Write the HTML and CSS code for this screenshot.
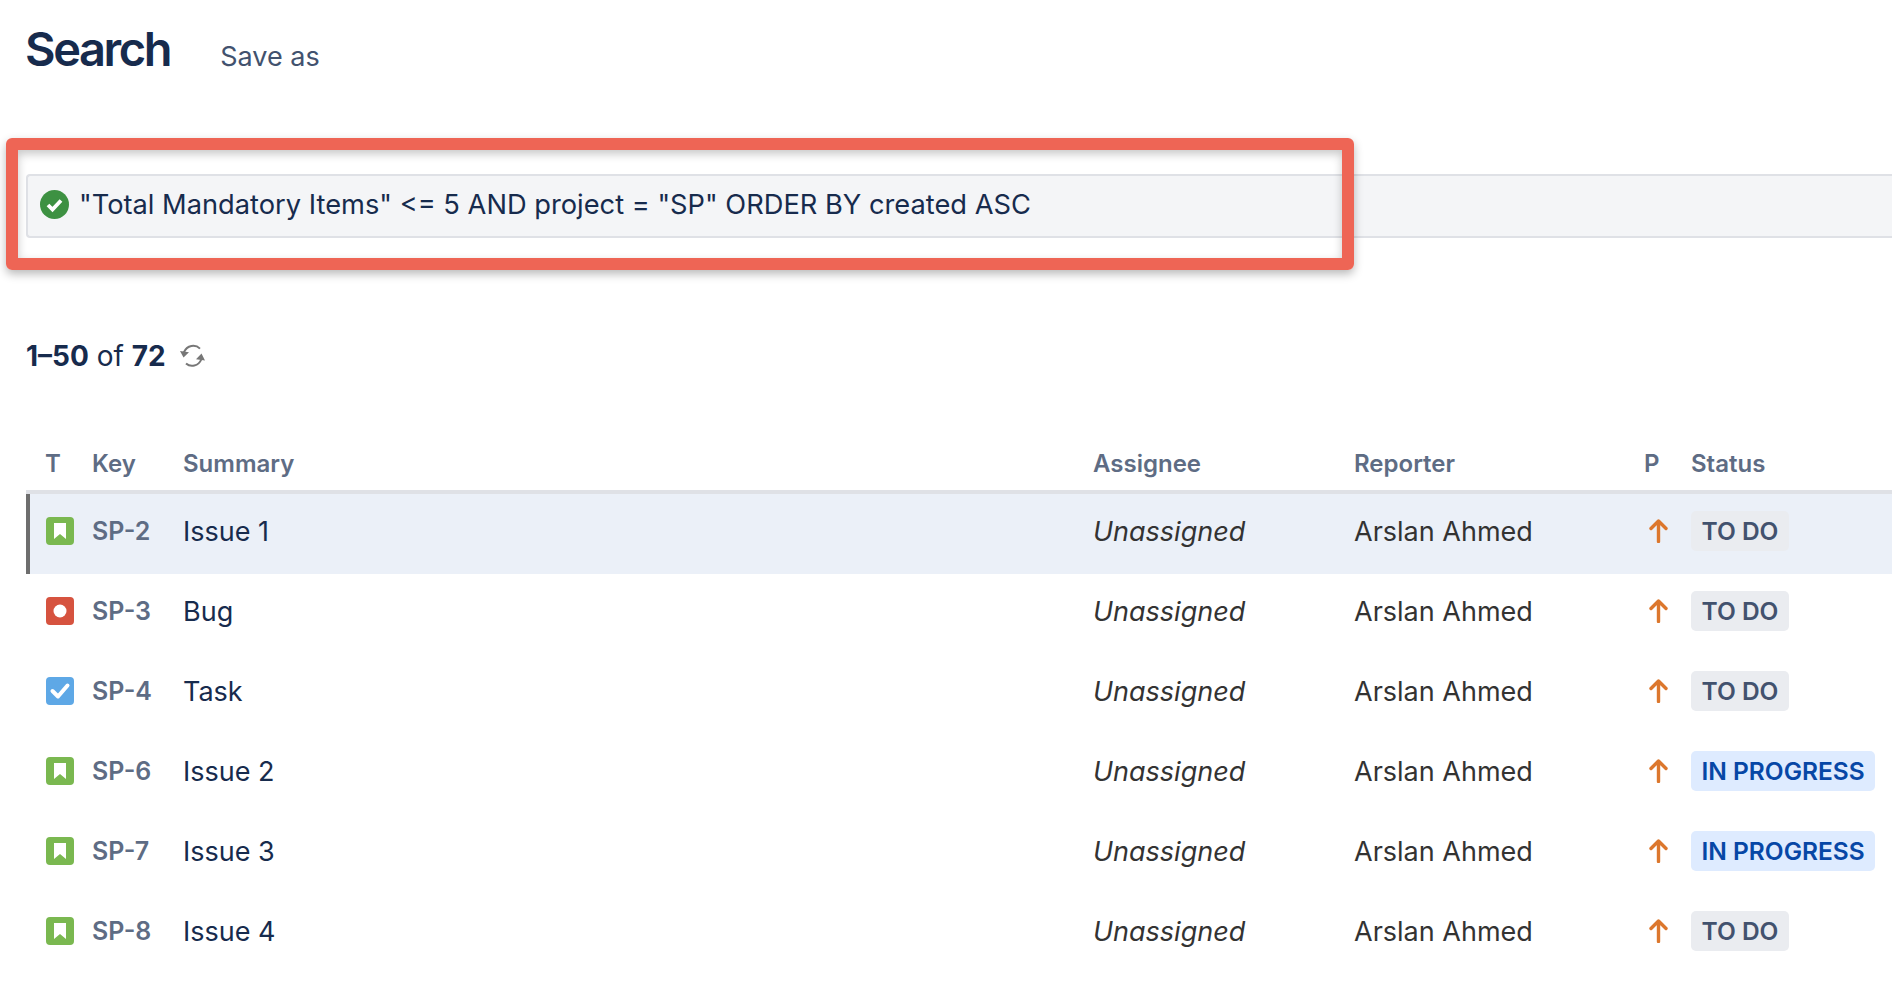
FILE: index.html
```html
<!DOCTYPE html>
<html lang="en">
<head>
<meta charset="utf-8">
<title>Search</title>
<link rel="stylesheet" href="styles.css">
</head>
<body>
<header class="page-head">
  <h1 class="title">Search</h1>
  <a class="save">Save as</a>
</header>
<section class="query">
  <svg class="ok" viewBox="0 0 29 29"><circle cx="14.5" cy="14.5" r="14.5" fill="#3d9142"/><path d="M8 15l4.5 4.5L21 10.5" fill="none" stroke="#fff" stroke-width="3.8"/></svg>
  <span>"Total Mandatory Items" &lt;= 5 AND project = "SP" ORDER BY created ASC</span>
</section>
<div class="note"></div>
<div class="count"><span><b>1–50</b> of <b>72</b></span>
  <svg class="refresh" viewBox="0 0 25 24"><path d="M20 4.600C15.500.200 7 .800 3.800 8.500M6 19.500c4.500 4 12.500 3 15.500-4.500" fill="none" stroke="#777" stroke-width="2"/><path d="M0 7l9 1.200-5.500 5.300zM25 16.500l-9-1.200 5.500-5.800z" fill="#777"/></svg>
</div>
<main class="issues">
  <div class="row head">
    <div class="t">T</div><div>Key</div><div>Summary</div><div>Assignee</div><div>Reporter</div><div>P</div><div>Status</div>
  </div>
  <div class="row item selected">
    <div class="t"><svg class="type story" viewBox="0 0 28 28"><path d="M8 6h12v16l-6-5-6 5z"/></svg></div>
    <div class="key">SP-2</div><div class="sum">Issue 1</div><div class="none">Unassigned</div><div class="rep">Arslan Ahmed</div>
    <div><svg class="prio" viewBox="0 0 19 24"><path d="M9.500 22.500V2M2 9.500l7.500-7.500 7.500 7.500"/></svg></div>
    <div class="state"><span class="pill">TO DO</span></div>
  </div>
  <div class="row item">
    <div class="t"><svg class="type bug" viewBox="0 0 28 28"><circle cx="14" cy="14" r="6.500"/></svg></div>
    <div class="key">SP-3</div><div class="sum">Bug</div><div class="none">Unassigned</div><div class="rep">Arslan Ahmed</div>
    <div><svg class="prio" viewBox="0 0 19 24"><path d="M9.500 22.500V2M2 9.500l7.500-7.500 7.500 7.500"/></svg></div>
    <div class="state"><span class="pill">TO DO</span></div>
  </div>
  <div class="row item">
    <div class="t"><svg class="type task" viewBox="0 0 28 28"><path class="tick" d="M6.500 14l5.500 5.500L21.500 8.500"/></svg></div>
    <div class="key">SP-4</div><div class="sum">Task</div><div class="none">Unassigned</div><div class="rep">Arslan Ahmed</div>
    <div><svg class="prio" viewBox="0 0 19 24"><path d="M9.500 22.500V2M2 9.500l7.500-7.500 7.500 7.500"/></svg></div>
    <div class="state"><span class="pill">TO DO</span></div>
  </div>
  <div class="row item">
    <div class="t"><svg class="type story" viewBox="0 0 28 28"><path d="M8 6h12v16l-6-5-6 5z"/></svg></div>
    <div class="key">SP-6</div><div class="sum">Issue 2</div><div class="none">Unassigned</div><div class="rep">Arslan Ahmed</div>
    <div><svg class="prio" viewBox="0 0 19 24"><path d="M9.500 22.500V2M2 9.500l7.500-7.500 7.500 7.500"/></svg></div>
    <div class="state"><span class="pill blue">IN PROGRESS</span></div>
  </div>
  <div class="row item">
    <div class="t"><svg class="type story" viewBox="0 0 28 28"><path d="M8 6h12v16l-6-5-6 5z"/></svg></div>
    <div class="key">SP-7</div><div class="sum">Issue 3</div><div class="none">Unassigned</div><div class="rep">Arslan Ahmed</div>
    <div><svg class="prio" viewBox="0 0 19 24"><path d="M9.500 22.500V2M2 9.500l7.500-7.500 7.500 7.500"/></svg></div>
    <div class="state"><span class="pill blue">IN PROGRESS</span></div>
  </div>
  <div class="row item">
    <div class="t"><svg class="type story" viewBox="0 0 28 28"><path d="M8 6h12v16l-6-5-6 5z"/></svg></div>
    <div class="key">SP-8</div><div class="sum">Issue 4</div><div class="none">Unassigned</div><div class="rep">Arslan Ahmed</div>
    <div><svg class="prio" viewBox="0 0 19 24"><path d="M9.500 22.500V2M2 9.500l7.500-7.500 7.500 7.500"/></svg></div>
    <div class="state"><span class="pill">TO DO</span></div>
  </div>
</main>
</body>
</html>
```
FILE: styles.css
```css
* { box-sizing: border-box; }
html, body { margin: 0; padding: 0; }
body {
  position: relative;
  height: 982px;
  overflow: hidden;
  background: #fff;
  color: #172b4d;
  font-family: Inter, "Liberation Sans", sans-serif;
}
.page-head {
  display: flex;
  align-items: baseline;
  gap: 50px;
  height: 174px;
  padding: 21px 0 0 25px;
}
.title {
  margin: 0;
  font-size: 47px;
  line-height: 56px;
  font-weight: 600;
  letter-spacing: -2.4px;
}
.save { font-size: 27px; color: #42526e; }
.query {
  display: flex;
  align-items: center;
  gap: 10px;
  height: 64px;
  margin-left: 26px;
  padding: 0 0 3px 12px;
  background: #f4f5f7;
  border: 2px solid #dfe1e6;
  border-right: 0;
  border-radius: 4px 0 0 4px;
  font-size: 27.250px;
}
.ok { width: 29px; height: 29px; flex: none; }
.note {
  position: absolute;
  left: 6px;
  top: 138px;
  width: 1348px;
  height: 132px;
  border: 12px solid #ee6555;
  border-radius: 6px;
  box-shadow: 0 4px 10px rgba(0,0,0,.28), inset 0 4px 10px rgba(0,0,0,.22);
}
.count {
  display: flex;
  align-items: center;
  gap: 14px;
  height: 36px;
  margin: 100px 0 0 26px;
  font-size: 28px;
}
.count b { font-weight: 700; }
.refresh { width: 25px; height: 24px; }
.issues { margin: 60px 0 0 26px; }
.row {
  display: grid;
  grid-template-columns: 66px 91px 910px 261px 290px 47px 1fr;
  align-items: center;
}
.head {
  height: 60px;
  padding-bottom: 12px;
  align-items: end;
  border-bottom: 4px solid #dfe1e6;
  font-size: 24px;
  font-weight: 600;
  color: #5e6c84;
}
.head .t { padding-left: 19px; }
.item { height: 80px; padding-bottom: 6px; font-size: 27px; }
.selected { background: #ebf0f8; box-shadow: inset 4px 0 0 #6e6e6e; }
.t { padding-left: 20px; }
.type { display: block; width: 28px; height: 28px; border-radius: 4px; }
.story { background: #7ab850; fill: #fff; }
.bug { background: #d6533f; fill: #fff; }
.task { background: #5ea8e6; }
.tick { fill: none; stroke: #fff; stroke-width: 4; stroke-linecap: round; stroke-linejoin: round; }
.key { font-size: 25px; font-weight: 600; color: #5e6c84; }
.none { font-style: italic; color: #333; }
.rep { color: #333; }
.prio {
  display: block;
  width: 19px;
  height: 24px;
  margin-left: 5px;
  fill: none;
  stroke: #dc772d;
  stroke-width: 3.4;
  stroke-linecap: round;
  stroke-linejoin: round;
}
.state { display: flex; }
.pill {
  display: block;
  height: 40px;
  padding: 0 10.500px;
  border-radius: 5px;
  background: #eaecf0;
  color: #42526e;
  font-size: 24.500px;
  font-weight: 600;
  line-height: 40px;
}
.blue { background: #deebff; color: #0747a6; }
```
